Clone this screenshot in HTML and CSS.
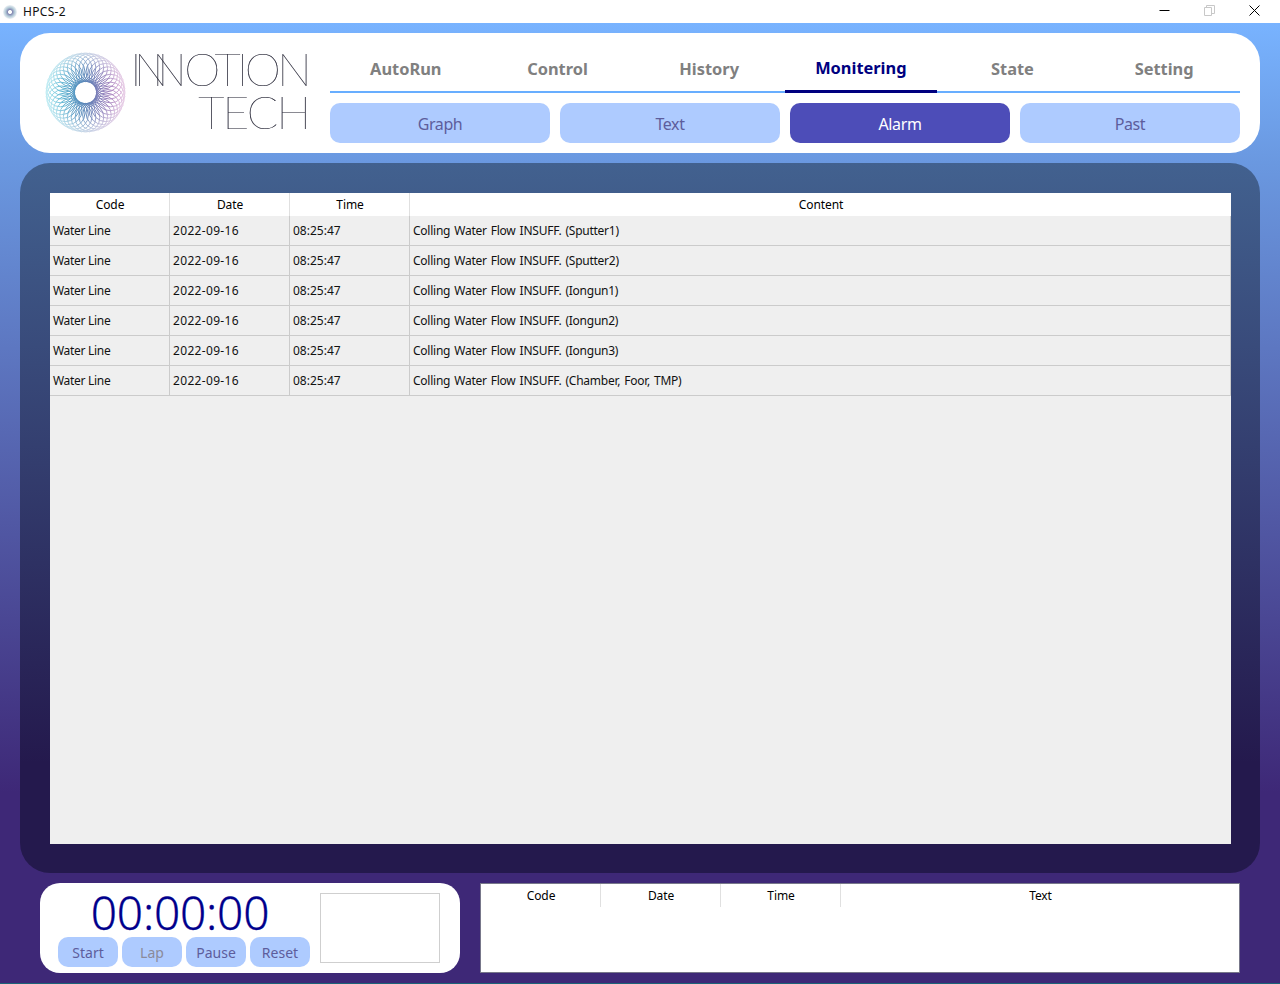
FILE: index.html
```html
<!DOCTYPE html>
<html lang="en">
<head>
<meta charset="utf-8">
<title>HPCS-2</title>
<link rel="stylesheet" href="styles.css">
</head>
<body>
<svg class="defs" width="0" height="0" aria-hidden="true">
  <defs>
    <linearGradient id="ringGrad" gradientUnits="userSpaceOnUse" x1="-38" y1="0" x2="38" y2="0">
      <stop offset="0" stop-color="#45c4da"/>
      <stop offset="0.5" stop-color="#5c85b8"/>
      <stop offset="1" stop-color="#b768b4"/>
    </linearGradient>
    <radialGradient id="ringFade" gradientUnits="userSpaceOnUse" cx="0" cy="0" r="41">
      <stop offset="0.55" stop-color="#fff" stop-opacity="0"/>
      <stop offset="1" stop-color="#fff" stop-opacity="0.7"/>
    </radialGradient>
    <radialGradient id="iconFade">
      <stop offset="0.22" stop-color="#fff"/>
      <stop offset="0.34" stop-color="#8388b2"/>
      <stop offset="0.65" stop-color="#b4cbd8"/>
      <stop offset="1" stop-color="#eef2f6"/>
    </radialGradient>
    <g id="quad" fill="none" stroke="#fff" stroke-width="0.95">
      <circle r="14.5" cx="25.5" cy="0"/><circle r="14.5" cx="25.19" cy="3.99"/><circle r="14.5" cx="24.25" cy="7.88"/><circle r="14.5" cx="22.72" cy="11.58"/><circle r="14.5" cx="20.63" cy="14.99"/><circle r="14.5" cx="18.03" cy="18.03"/><circle r="14.5" cx="14.99" cy="20.63"/><circle r="14.5" cx="11.58" cy="22.72"/><circle r="14.5" cx="7.88" cy="24.25"/><circle r="14.5" cx="3.99" cy="25.19"/>
    </g>
    <mask id="ringMask" maskUnits="userSpaceOnUse" x="-41" y="-41" width="82" height="82">
      <use href="#quad"/>
      <use href="#quad" transform="rotate(90)"/>
      <use href="#quad" transform="rotate(180)"/>
      <use href="#quad" transform="rotate(270)"/>
    </mask>
  </defs>
</svg>

<header class="titlebar">
  <svg class="app-icon" viewBox="0 0 14 14" width="14" height="14"><circle cx="7" cy="7" r="7" fill="url(#iconFade)"/></svg>
  <span class="app-name">HPCS-2</span>
  <div class="win-controls">
    <svg class="win-btn" width="11" height="11" viewBox="0 0 11 11"><path d="M0.5 5.5h10" stroke="#000" fill="none"/></svg>
    <svg class="win-btn" width="11" height="11" viewBox="0 0 11 11"><path d="M0.5 2.5h7v8h-7zM2.5 2.5v-2h8v8h-3" stroke="#c8c8c8" fill="none"/></svg>
    <svg class="win-btn" width="11" height="11" viewBox="0 0 11 11"><path d="M0.5 0.5l10 10M10.5 0.5l-10 10" stroke="#000" fill="none"/></svg>
  </div>
</header>

<main class="app">
  <section class="top-card">
    <div class="logo">
      <svg class="logo-mark" viewBox="-41 -41 82 82" width="81" height="81">
        <rect x="-41" y="-41" width="82" height="82" fill="url(#ringGrad)" mask="url(#ringMask)"/>
        <circle r="41" fill="url(#ringFade)"/>
      </svg>
      <div class="logo-text">
        <span class="logo-line"><span class="logo-i">I</span><span class="logo-n1">N</span><span class="logo-n2">N</span>OTION</span>
        <span class="logo-line logo-line-2">TECH</span>
      </div>
    </div>
    <nav class="nav">
      <div class="tabs">
        <a class="tab">AutoRun</a>
        <a class="tab">Control</a>
        <a class="tab">History</a>
        <a class="tab tab-active">Monitering</a>
        <a class="tab">State</a>
        <a class="tab">Setting</a>
      </div>
      <div class="subtabs">
        <button class="subtab">Graph</button>
        <button class="subtab">Text</button>
        <button class="subtab subtab-active">Alarm</button>
        <button class="subtab">Past</button>
      </div>
    </nav>
  </section>

  <section class="panel">
    <div class="table-wrap">
      <table class="grid">
        <colgroup><col class="col-fixed"><col class="col-fixed"><col class="col-fixed"><col></colgroup>
        <thead><tr><th>Code</th><th>Date</th><th>Time</th><th>Content</th></tr></thead>
        <tbody>
          <tr><td class="c-code">Water Line</td><td class="c-date">2022-09-16</td><td>08:25:47</td><td class="c-text">Colling Water Flow INSUFF. (Sputter1)</td></tr>
          <tr><td class="c-code">Water Line</td><td class="c-date">2022-09-16</td><td>08:25:47</td><td class="c-text">Colling Water Flow INSUFF. (Sputter2)</td></tr>
          <tr><td class="c-code">Water Line</td><td class="c-date">2022-09-16</td><td>08:25:47</td><td class="c-text">Colling Water Flow INSUFF. (Iongun1)</td></tr>
          <tr><td class="c-code">Water Line</td><td class="c-date">2022-09-16</td><td>08:25:47</td><td class="c-text">Colling Water Flow INSUFF. (Iongun2)</td></tr>
          <tr><td class="c-code">Water Line</td><td class="c-date">2022-09-16</td><td>08:25:47</td><td class="c-text">Colling Water Flow INSUFF. (Iongun3)</td></tr>
          <tr><td class="c-code">Water Line</td><td class="c-date">2022-09-16</td><td>08:25:47</td><td class="c-text">Colling Water Flow INSUFF. (Chamber, Foor, TMP)</td></tr>
        </tbody>
      </table>
    </div>
  </section>

  <section class="bottom">
    <div class="timer-card">
      <div class="timer-main">
        <div class="timer">00:00:00</div>
        <div class="timer-btns">
          <button class="tbtn">Start</button>
          <button class="tbtn tbtn-off">Lap</button>
          <button class="tbtn">Pause</button>
          <button class="tbtn">Reset</button>
        </div>
      </div>
      <div class="timer-box"></div>
    </div>
    <div class="log">
      <table class="grid log-grid">
        <colgroup><col class="col-fixed"><col class="col-fixed"><col class="col-fixed"><col></colgroup>
        <thead><tr><th>Code</th><th>Date</th><th>Time</th><th>Text</th></tr></thead>
      </table>
    </div>
  </section>
</main>
</body>
</html>
```
FILE: styles.css
```css
* { box-sizing: border-box; }
html, body { margin: 0; padding: 0; height: 100%; }
body {
  width: 1280px;
  height: 984px;
  overflow: hidden;
  display: flex;
  flex-direction: column;
  background: #fff;
  font-family: "Noto Sans", "Liberation Sans", sans-serif;
  color: #000;
}
.defs { position: absolute; }

.titlebar {
  height: 23px;
  flex: none;
  display: flex;
  align-items: center;
  padding-left: 3px;
  background: #fff;
  font-size: 12px;
}
.app-icon { margin-right: 6px; }
.app-name { color: #111; letter-spacing: 0.3px; }
.win-controls { margin-left: auto; display: flex; gap: 34px; padding: 0 20px 2px 0; }
.win-btn { display: block; }

.app {
  flex: 1;
  display: flex;
  flex-direction: column;
  gap: 10px;
  padding: 10px 20px;
  border-bottom: 1px solid #1c6478;
  background: linear-gradient(180deg, #78b3ff 0, #6a98e0 140px, #3e2877 770px);
}

.top-card {
  height: 120px;
  flex: none;
  display: flex;
  background: #fff;
  border-radius: 30px;
}
.logo { width: 310px; flex: none; display: flex; padding: 19px 0 0 25px; }
.logo-mark { display: block; flex: none; }
.logo-text {
  width: 183px;
  margin-top: -5px;
  display: flex;
  flex-direction: column;
  align-items: flex-end;
  font-family: Lato, sans-serif;
  font-weight: 100;
  font-size: 46px;
  line-height: 43px;
  color: #111122;
  -webkit-text-stroke: 0.2px #222233;
  will-change: transform;
}
.logo-line { display: block; letter-spacing: -3.6px; padding-right: 1px; }
.logo-i { letter-spacing: -7.5px; }
.logo-n1 { letter-spacing: -16px; }
.logo-n2 { letter-spacing: -2.4px; }
.logo-line-2 { letter-spacing: -1.8px; padding-right: 0; }

.nav { width: 910px; flex: none; }
.tabs {
  height: 60px;
  display: grid;
  grid-template-columns: repeat(6, 1fr);
  border-bottom: 2px solid #68aeff;
}
.tab {
  display: flex;
  align-items: flex-end;
  justify-content: center;
  padding-bottom: 13px;
  font-size: 16.4px;
  font-weight: 700;
  color: #808080;
}
.tab-active {
  color: #00007f;
  padding-bottom: 11px;
  height: 60px;
  border-bottom: 3px solid #00007f;
}
.subtabs {
  display: grid;
  grid-template-columns: repeat(4, 220px);
  gap: 10px;
  margin-top: 10px;
}
.subtab {
  height: 40px;
  border: 0;
  border-radius: 10px;
  padding: 2px 0 0;
  background: #aecbff;
  color: #5d5d9c;
  font: 400 16px "Noto Sans", sans-serif;
  letter-spacing: -0.4px;
}
.subtab-active { background: #4d4db8; color: #fff; }

.panel {
  height: 710px;
  flex: none;
  padding: 30px 29px 29px 30px;
  border-radius: 30px;
  background: linear-gradient(180deg, #42618f 0, #24194d 600px);
}
.table-wrap { height: 100%; background: #efefef; }

.grid {
  width: 100%;
  table-layout: fixed;
  border-collapse: separate;
  border-spacing: 0;
  font-size: 12px;
}
.col-fixed { width: 120px; }
.grid th {
  height: 23px;
  padding: 0 0 0 1px;
  background: #fff;
  font-weight: 400;
  letter-spacing: -0.1px;
  border-right: 1px solid #e0e0e0;
}
.grid th:last-child { border-right: 0; }
.grid td {
  height: 30px;
  padding: 0 0 0 3px;
  color: #111;
  white-space: nowrap;
  border-right: 1px solid #cbcbcb;
  border-bottom: 1px solid #cbcbcb;
}
.grid .c-code { letter-spacing: -0.3px; }
.grid .c-date { letter-spacing: 0.33px; }
.grid .c-text { letter-spacing: -0.25px; word-spacing: 1.2px; }

.bottom { height: 90px; flex: none; display: flex; gap: 20px; padding-left: 20px; padding-right: 20px; }
.timer-card {
  width: 420px;
  display: flex;
  padding: 10px 20px 10px 18px;
  background: #fff;
  border-radius: 20px;
}
.timer-main { width: 252px; display: flex; flex-direction: column; align-items: center; }
.timer {
  height: 34px;
  margin: 0 8px 10px 0;
  font-size: 46px;
  font-weight: 300;
  line-height: 38px;
  letter-spacing: -0.2px;
  color: #00008c;
  -webkit-text-stroke: 0.3px #00008c;
}
.timer-btns { display: flex; gap: 4px; }
.tbtn {
  width: 60px;
  height: 30px;
  padding: 0;
  border: 0;
  border-radius: 10px;
  background: #aecbff;
  color: #5d5d9c;
  font: 400 14px "Noto Sans", sans-serif;
}
.tbtn-off { color: #8a8a9a; }
.timer-box { width: 120px; height: 70px; margin-left: 10px; border: 1px solid #cfcfcf; }

.log { width: 760px; background: #fff; border: 1px solid #77778a; }
```
